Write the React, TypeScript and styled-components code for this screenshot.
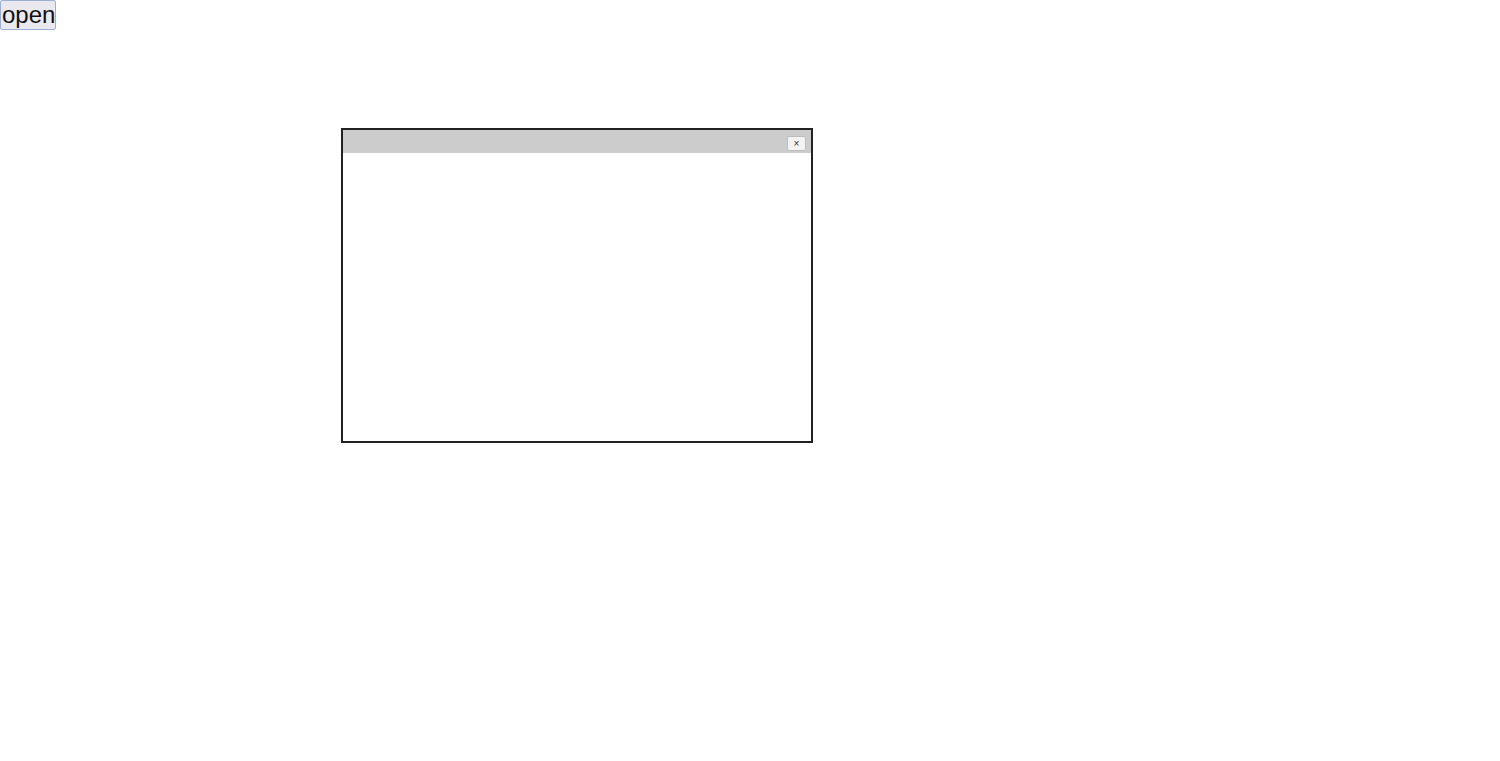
import React from "react";
import styled, { createGlobalStyle } from "styled-components";

const Global = createGlobalStyle`
  html, body { margin: 0; padding: 0; background: #ffffff; }
  body { font-family: "Liberation Sans", Arial, sans-serif; }
`;

const OpenButton = styled.button`
  display: block;
  margin: 0;
  padding: 0 1px;
  height: 30px;
  width: 56px;
  font-family: "Liberation Sans", Arial, sans-serif;
  font-size: 24px;
  line-height: 28px;
  color: #111;
  background: #e9e9ef;
  border: 1px solid #9aaed6;
  border-radius: 2px;
  box-sizing: border-box;
`;

const Window = styled.div`
  position: absolute;
  left: 341px;
  top: 128px;
  width: 472px;
  height: 315px;
  box-sizing: border-box;
  border: 2px solid #222;
  background: #fff;
  display: flex;
  flex-direction: column;
`;

const TitleBar = styled.div`
  height: 23px;
  background: #cccccc;
  display: flex;
  align-items: flex-start;
  justify-content: flex-end;
  padding: 6px 5px 0 0;
  box-sizing: border-box;
`;

const CloseButton = styled.button`
  width: 19px;
  height: 15px;
  padding: 0;
  margin: 0;
  font-family: "Liberation Sans", Arial, sans-serif;
  font-size: 10px;
  line-height: 13px;
  color: #333;
  background: #f3f3f3;
  border: 1px solid #bdbdbd;
  border-radius: 2px;
  box-sizing: border-box;
`;

const Body = styled.div`
  flex: 1;
`;

export default function App() {
  return (
    <>
      <Global />
      <OpenButton>open</OpenButton>
      <Window>
        <TitleBar>
          <CloseButton>×</CloseButton>
        </TitleBar>
        <Body />
      </Window>
    </>
  );
}
